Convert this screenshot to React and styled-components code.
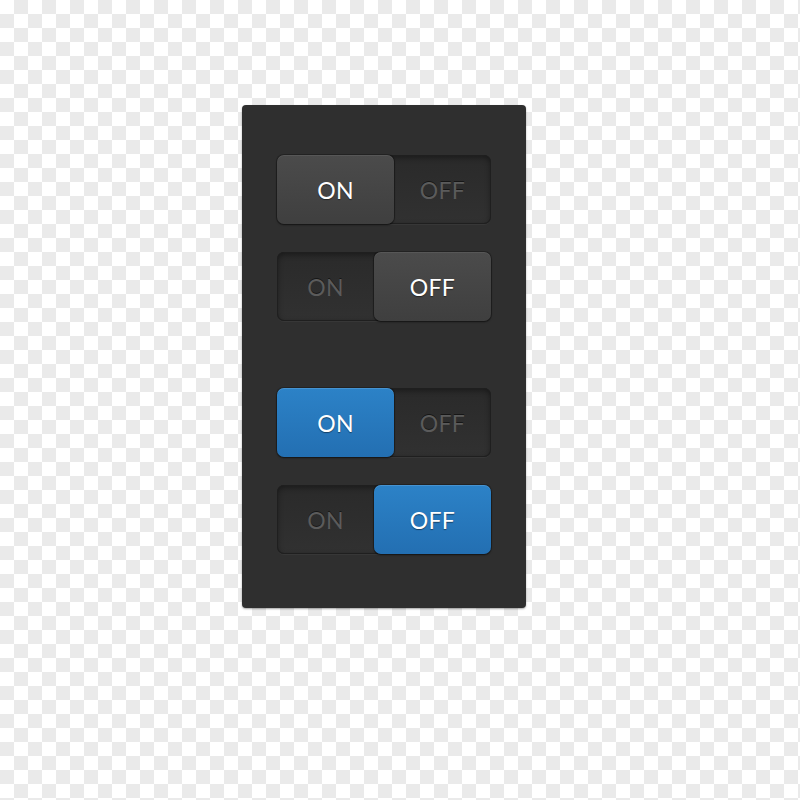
import React from 'react'
import styled, { createGlobalStyle, css } from 'styled-components'

const Global = createGlobalStyle`
  html, body {
    margin: 0;
    padding: 0;
    background: #ffffff;
  }
  body {
    font-family: Lato, "Open Sans", sans-serif;
  }
`

const Page = styled.div`
  width: 800px;
  height: 800px;
  padding: 105px 0 0 242px;
  box-sizing: border-box;
  background-color: #ffffff;
  background-image:
    linear-gradient(45deg, #eaeaea 25%, transparent 25%, transparent 75%, #eaeaea 75%),
    linear-gradient(45deg, #eaeaea 25%, transparent 25%, transparent 75%, #eaeaea 75%);
  background-size: 28px 28px;
  background-position: 0 0, 14px 14px;
`

const Panel = styled.div`
  width: 284px;
  height: 503px;
  box-sizing: border-box;
  padding: 50px 35px 0 35px;
  background: #2f2f2f;
  border-radius: 4px;
  box-shadow: 0 1px 2px rgba(0, 0, 0, 0.35);
  display: flex;
  flex-direction: column;
`

const Group = styled.div`
  display: flex;
  flex-direction: column;
  gap: 28px;
  & + & {
    margin-top: 67px;
  }
`

const Track = styled.div`
  width: 214px;
  height: 69px;
  display: flex;
  border-radius: 7px;
  background: linear-gradient(180deg, #2a2a2a 0%, #313131 100%);
  box-shadow: inset 0 0 0 1px #1f1f1f, inset 0 2px 6px rgba(0, 0, 0, 0.45),
    0 1px 0 rgba(255, 255, 255, 0.04);
`

const Segment = styled.div`
  flex: ${(p) => (p.$active ? '0 0 117px' : '1 1 auto')};
  display: flex;
  align-items: center;
  justify-content: center;
  font-size: 23px;
  letter-spacing: 0.3px;
  color: #5b5b5b;
  border-radius: 7px;
  text-shadow: 0 -1px 0 rgba(0, 0, 0, 0.5);
  ${(p) =>
    p.$active &&
    css`
      color: #ffffff;
      text-shadow: 0 1px 1px rgba(0, 0, 0, 0.45);
      background: ${p.$blue
        ? 'linear-gradient(180deg, #2c82c7 0%, #236fb2 100%)'
        : 'linear-gradient(180deg, #4b4b4b 0%, #3f3f3f 100%)'};
      box-shadow: inset 0 1px 0 ${p.$blue ? 'rgba(120,180,230,0.35)' : 'rgba(255,255,255,0.07)'},
        0 1px 2px rgba(0, 0, 0, 0.55), 0 0 0 1px rgba(0, 0, 0, 0.25);
    `}
`

function Toggle({ on, blue }) {
  return (
    <Track>
      <Segment $active={on} $blue={blue}>ON</Segment>
      <Segment $active={!on} $blue={blue}>OFF</Segment>
    </Track>
  )
}

export default function App() {
  return (
    <Page>
      <Global />
      <Panel>
        <Group>
          <Toggle on />
          <Toggle on={false} />
        </Group>
        <Group>
          <Toggle on blue />
          <Toggle on={false} blue />
        </Group>
      </Panel>
    </Page>
  )
}
